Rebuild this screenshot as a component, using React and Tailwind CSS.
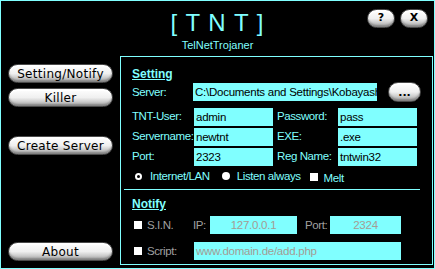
import React from "react";

const font = { fontFamily: '"Liberation Sans", Arial, sans-serif' };

function PillButton({ children, className = "" }) {
  return (
    <button
      className={`flex items-center justify-center rounded-full border border-[#4a4a4a] bg-gradient-to-b from-white via-[#f0f0f0] to-[#a8a8a8] text-black shadow-[inset_0_-2px_2px_rgba(0,0,0,0.25),inset_0_2px_1px_#fff] ${className}`}
      style={{ fontFamily: '"DejaVu Sans", Verdana, sans-serif' }}
    >
      {children}
    </button>
  );
}

function Field({ value, className = "", muted = false, center = false }) {
  return (
    <div
      className={`h-[18px] bg-[#80ffff] overflow-hidden whitespace-nowrap text-[11.5px] leading-[18px] tracking-[-0.25px] ${
        muted ? "text-[#a49c94]" : "text-black"
      } ${center ? "text-center" : "pl-[2px]"} ${className}`}
    >
      {value}
    </div>
  );
}

function Label({ children, className = "", muted = false }) {
  return (
    <span
      className={`whitespace-nowrap text-[11.5px] leading-[14px] tracking-[-0.4px] ${muted ? "text-[#a0a0a0]" : "text-[#80ffff]"} ${className}`}
    >
      {children}
    </span>
  );
}

function Box() {
  return <span className="block w-[8px] h-[8px] bg-white" />;
}

export default function App() {
  return (
    <div className="w-[435px] h-[269px] bg-black border border-[#80ffff] flex flex-col overflow-hidden" style={font}>
      {/* header */}
      <div className="h-[55px] shrink-0 grid grid-cols-[1fr_auto_1fr]">
        <div />
        <div className="flex flex-col items-center pt-[8px]">
          <div className="text-[24px] leading-[28px] text-[#80ffff] tracking-[1px]">[ T N T ]</div>
          <div className="text-[11px] leading-[13px] text-[#80ffff] mt-[2px]">TelNetTrojaner</div>
        </div>
        <div className="flex justify-end gap-[5px] pt-[8px] pr-[6px]">
          <PillButton className="w-[28px] h-[19px] text-[11px] font-bold">?</PillButton>
          <PillButton className="w-[28px] h-[19px] text-[11px] font-bold">X</PillButton>
        </div>
      </div>

      {/* body */}
      <div className="flex h-[212px] pb-[3px] pr-[1px]">
        {/* sidebar */}
        <div className="w-[119px] flex flex-col pl-[7px] pt-[8px] pb-[4px]">
          <PillButton className="w-[105px] h-[19px] text-[12px] tracking-[0.3px]">Setting/Notify</PillButton>
          <PillButton className="w-[105px] h-[19px] text-[12px] tracking-[0.3px] mt-[5px]">Killer</PillButton>
          <PillButton className="w-[105px] h-[19px] text-[12px] tracking-[0.3px] mt-[29px]">Create Server</PillButton>
          <div className="flex-1" />
          <PillButton className="w-[105px] h-[19px] text-[12px] tracking-[0.3px]">About</PillButton>
        </div>

        {/* panel */}
        <div className="flex-1 h-[209px] border border-[#80ffff] flex flex-col pl-[11px] pt-[10px]">
          <div className="text-[12px] leading-[14px] font-bold underline text-[#80ffff]">Setting</div>

          <div className="flex items-start mt-[2px]">
            <Label className="w-[61px] mt-[2px]">Server:</Label>
            <Field value="C:\Documents and Settings\Kobayashi\Desktop\tnt.exe" className="w-[184px]" />
            <PillButton className="w-[33px] h-[20px] ml-[11px] -mt-[1px] text-[11px] font-bold leading-none">...</PillButton>
          </div>

          <div className="grid grid-cols-[62px_79px_65px_79px] gap-y-[2px] mt-[6px] items-start">
            <Label className="mt-[1px]">TNT-User:</Label>
            <Field value="admin" />
            <Label className="ml-[4px] mt-[1px]">Password:</Label>
            <Field value="pass" />

            <Label className="mt-[1px]">Servername:</Label>
            <Field value="newtnt" />
            <Label className="ml-[4px] mt-[1px]">EXE:</Label>
            <Field value=".exe" />

            <Label className="mt-[1px]">Port:</Label>
            <Field value="2323" />
            <Label className="ml-[4px] mt-[1px]">Reg Name:</Label>
            <Field value="tntwin32" />
          </div>

          <div className="flex items-center mt-[3px] h-[14px]">
            <span className="ml-[3px] block w-[7px] h-[7px] rounded-full border-2 border-white" />
            <Label className="ml-[8px]">Internet/LAN</Label>
            <span className="ml-[12px] block w-[8px] h-[8px] rounded-full bg-white" />
            <Label className="ml-[7px]">Listen always</Label>
            <span className="ml-[9px] mt-[2px]"><Box /></span>
            <Label className="ml-[6px] mt-[4px]">Melt</Label>
          </div>

          <div className="h-px bg-[#80ffff] w-[296px] mt-[6px] -ml-[8px]" />

          <div className="text-[12px] leading-[14px] font-bold underline text-[#80ffff] mt-[7px]">Notify</div>

          <div className="flex items-center mt-[5px]">
            <span className="ml-[2px]"><Box /></span>
            <Label muted className="ml-[5px] w-[46px]">S.I.N.</Label>
            <Label muted className="w-[17px]">IP:</Label>
            <Field value="127.0.0.1" muted center className="w-[87px]" />
            <Label muted className="ml-[8px] w-[25px]">Port:</Label>
            <Field value="2324" muted center className="w-[71px]" />
          </div>

          <div className="flex items-center mt-[8px]">
            <span className="ml-[2px]"><Box /></span>
            <Label muted className="ml-[5px] w-[47px]">Script:</Label>
            <Field value="www.domain.de/add.php" muted className="w-[207px]" />
          </div>
        </div>
      </div>
    </div>
  );
}
